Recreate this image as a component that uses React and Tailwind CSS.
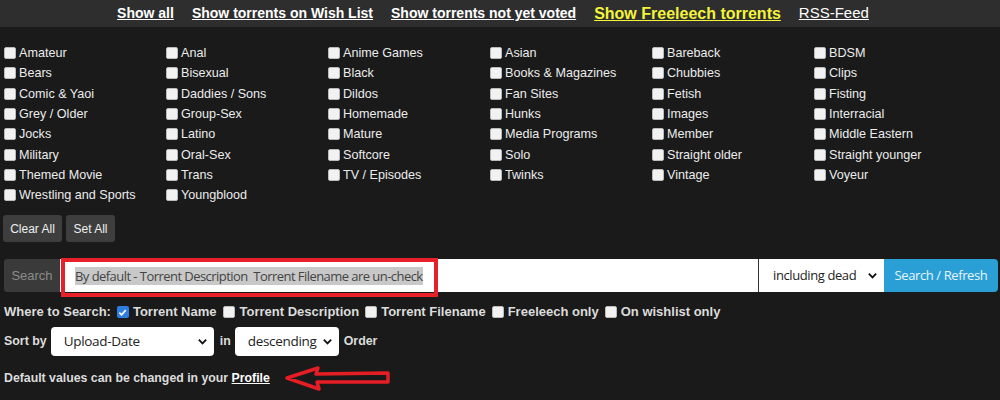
import * as React from "react";

const categories = [
  ["Amateur", "Anal", "Anime Games", "Asian", "Bareback", "BDSM"],
  ["Bears", "Bisexual", "Black", "Books & Magazines", "Chubbies", "Clips"],
  ["Comic & Yaoi", "Daddies / Sons", "Dildos", "Fan Sites", "Fetish", "Fisting"],
  ["Grey / Older", "Group-Sex", "Homemade", "Hunks", "Images", "Interracial"],
  ["Jocks", "Latino", "Mature", "Media Programs", "Member", "Middle Eastern"],
  ["Military", "Oral-Sex", "Softcore", "Solo", "Straight older", "Straight younger"],
  ["Themed Movie", "Trans", "TV / Episodes", "Twinks", "Vintage", "Voyeur"],
  ["Wrestling and Sports", "Youngblood"],
];

const Box = ({ checked, className = "" }) =>
  checked ? (
    <span className={"inline-flex w-[12px] h-[12px] shrink-0 items-center justify-center rounded-[2px] bg-[#2f7de1] " + className}>
      <svg width="9" height="9" viewBox="0 0 10 10">
        <path d="M1.5 5.2 L4 7.6 L8.6 2.4" stroke="#fff" strokeWidth="1.8" fill="none" />
      </svg>
    </span>
  ) : (
    <span className={"inline-block w-[12px] h-[12px] shrink-0 rounded-[2px] bg-[#f2f2f2] border border-[#bbb] " + className} />
  );

const Chevron = () => (
  <svg width="11" height="11" viewBox="0 0 12 12">
    <path d="M2 4 L6 8 L10 4" stroke="#111" strokeWidth="2" fill="none" />
  </svg>
);

const App = () => {
  return (
    <div className="w-[1000px] h-[400px] overflow-hidden bg-[#1a1a1a] text-[#e6e6e6] font-['Liberation_Sans',Arial,sans-serif]">
      {/* Top links */}
      <div className="h-[27px] bg-[#2e2e2e] flex items-center justify-center gap-[18px] pr-[14px]">
        <a className="text-[14px] font-bold underline text-white">Show all</a>
        <a className="text-[14px] font-bold underline text-white">Show torrents on Wish List</a>
        <a className="text-[14px] font-bold underline text-white">Show torrents not yet voted</a>
        <a className="text-[16px] font-bold underline text-[#f4f43a]">Show Freeleech torrents</a>
        <a className="text-[15px] underline text-white">RSS-Feed</a>
      </div>

      {/* Categories */}
      <div className="pt-[16px] pl-[4px]">
        {categories.map((row, i) => (
          <div key={i} className="grid grid-cols-[162px_162px_162px_162px_162px_162px] h-[20.3px]">
            {row.map((c) => (
              <label key={c} className="flex items-center gap-[3px] text-[12.6px] leading-[20px] text-[#ececec]">
                <Box />
                {c}
              </label>
            ))}
          </div>
        ))}
      </div>

      {/* Clear / Set */}
      <div className="flex gap-[4px] pl-[3px] mt-[10px]">
        <button className="h-[27px] w-[59px] rounded-[3px] bg-[#3e3e3e] text-[12px] text-[#eee]">Clear All</button>
        <button className="h-[27px] w-[49px] rounded-[3px] bg-[#3e3e3e] text-[12px] text-[#eee]">Set All</button>
      </div>

      {/* Search row */}
      <div className="relative flex mt-[17px] ml-[4px] mr-[2px] h-[33px]">
        <div className="w-[56px] flex items-center justify-center bg-[#3a3a3a] text-[13px] text-[#8c8c8c] rounded-l-[3px]">
          Search
        </div>
        <div className="flex-1 bg-white flex items-center pl-[15px] border-r border-[#333]">
          <span className="bg-[#c8c8c8] text-[#444] text-[13px] font-['Open_Sans',sans-serif] tracking-[-0.55px] leading-[18px]">
            By default - Torrent Description&nbsp; Torrent Filename are un-check
          </span>
        </div>
        <div className="w-[125px] bg-white flex items-center justify-between pl-[14px] pr-[6px] text-[13px] text-[#222] font-['Open_Sans',sans-serif] tracking-[-0.4px]">
          including dead
          <Chevron />
        </div>
        <button className="w-[114px] bg-[#2a9fd6] rounded-r-[4px] text-[13px] text-[#e8f4fb] font-['Open_Sans',sans-serif] tracking-[-0.4px]">
          Search / Refresh
        </button>
        {/* red annotation box */}
        <div className="absolute left-[57px] top-[-1px] w-[377px] h-[39px] border-[4px] border-[#e8202a]" />
      </div>

      {/* Where to search */}
      <div className="flex items-center pl-[4px] mt-[10px] text-[13px] font-bold text-[#dcdcdc]">
        <span>Where to Search:</span>
        <Box checked className="ml-[6px] mr-[4px]" />
        <span>Torrent Name</span>
        <Box className="ml-[7px] mr-[4px]" />
        <span>Torrent Description</span>
        <Box className="ml-[6px] mr-[4px]" />
        <span>Torrent Filename</span>
        <Box className="ml-[6px] mr-[4px]" />
        <span>Freeleech only</span>
        <Box className="ml-[6px] mr-[4px]" />
        <span>On wishlist only</span>
      </div>

      {/* Sort by */}
      <div className="flex items-center pl-[4px] mt-[5px] text-[12.4px] font-bold text-[#dcdcdc]">
        <span>Sort by</span>
        <div className="ml-[4px] w-[163px] h-[29px] bg-white rounded-[4px] flex items-center justify-between pl-[13px] pr-[6px] text-[13.5px] font-normal text-[#222] font-['Open_Sans',sans-serif] tracking-[-0.3px]">
          Upload-Date
          <Chevron />
        </div>
        <span className="ml-[6px]">in</span>
        <div className="ml-[4px] w-[104px] h-[29px] bg-white rounded-[4px] flex items-center justify-between pl-[13px] pr-[6px] text-[13.5px] font-normal text-[#222] font-['Open_Sans',sans-serif] tracking-[-0.3px]">
          descending
          <Chevron />
        </div>
        <span className="ml-[5px]">Order</span>
      </div>

      {/* Profile note */}
      <div className="flex items-center pl-[4px] mt-[9px] text-[12.3px] font-bold text-[#dcdcdc]">
        <span>Default values can be changed in your&nbsp;</span>
        <a className="underline text-white">Profile</a>
        <svg className="ml-[14px]" width="110" height="26" viewBox="0 0 110 26">
          <path
            d="M3 13 L34 3 L32 9 L104 8 L104 17 L33 17 L35 24 Z"
            stroke="#e51d25"
            strokeWidth="3.5"
            strokeLinejoin="round"
            fill="none"
          />
        </svg>
      </div>
    </div>
  );
};

export default App;
